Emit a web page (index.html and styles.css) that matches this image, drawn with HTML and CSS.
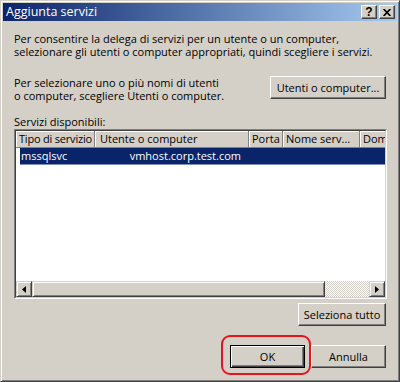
FILE: index.html
```html
<!DOCTYPE html>
<html lang="it">
<head>
<meta charset="utf-8">
<title>Aggiunta servizi</title>
<link rel="stylesheet" href="styles.css">
</head>
<body>
<div class="window">
  <div class="titlebar">
    <span class="title">Aggiunta servizi</span>
    <div class="caption-buttons">
      <span class="cap-btn help">?</span>
      <span class="cap-btn close"><svg width="8" height="7" viewBox="0 0 8 7"><path d="M0.6 0 L7.4 7 M7.4 0 L0.6 7" stroke="#000" stroke-width="1.7" fill="none"/></svg></span>
    </div>
  </div>
  <div class="content">
    <p class="text intro">Per consentire la delega di servizi per un utente o un computer,<br>selezionare gli utenti o computer appropriati, quindi scegliere i servizi.</p>
    <div class="pick-row">
      <p class="text">Per selezionare uno o più nomi di utenti<br>o computer, scegliere Utenti o computer.</p>
      <button class="btn btn-users">Utenti o computer...</button>
    </div>
    <div class="label">Servizi disponibili:</div>
    <div class="listview">
      <div class="lv-inner">
        <div class="lv-header">
          <div class="col c1">Tipo di servizio</div>
          <div class="col c2">Utente o computer</div>
          <div class="col c3">Porta</div>
          <div class="col c4">Nome serv...</div>
          <div class="col c5">Dom</div>
        </div>
        <div class="lv-body">
          <div class="lv-row selected">
            <div class="cell r1">mssqlsvc</div>
            <div class="cell r2">vmhost.corp.test.com</div>
          </div>
        </div>
        <div class="hscroll">
          <div class="sb-btn"><svg width="4" height="7" viewBox="0 0 4 7"><polygon points="0,3.5 4,0 4,7" fill="#000"/></svg></div>
          <div class="sb-thumb"></div>
          <div class="sb-track"></div>
          <div class="sb-btn"><svg width="4" height="7" viewBox="0 0 4 7"><polygon points="4,3.5 0,0 0,7" fill="#000"/></svg></div>
        </div>
      </div>
    </div>
    <div class="select-all-row"><button class="btn btn-all">Seleziona tutto</button></div>
    <div class="footer">
      <button class="btn btn-dlg default">OK</button>
      <button class="btn btn-dlg">Annulla</button>
    </div>
  </div>
</div>
</body>
</html>
```

FILE: styles.css
```css
* { box-sizing: border-box; }
html, body { margin: 0; padding: 0; }
body {
  width: 400px;
  height: 382px;
  overflow: hidden;
  background: #d4d0c8;
  font-family: "Open Sans", "Noto Sans", sans-serif;
  font-size: 11px;
  color: #000;
}
.window {
  width: 400px;
  height: 382px;
  border: 1px solid;
  border-color: #d4d0c8 #404040 #404040 #d4d0c8;
  box-shadow: inset 1px 1px #fff, inset -1px -1px #808080;
  padding: 2px;
  display: flex;
  flex-direction: column;
  background: #d4d0c8;
}
.titlebar {
  height: 18px;
  flex: none;
  display: flex;
  align-items: center;
  justify-content: space-between;
  padding: 0 2px 0 3px;
  background: linear-gradient(to right, #0a246a, #a6caf0);
}
.title {
  color: #fff;
  font-size: 12.5px;
  line-height: 18px;
}
.caption-buttons {
  display: flex;
  gap: 2px;
}
.cap-btn {
  width: 16px;
  height: 14px;
  display: flex;
  align-items: center;
  justify-content: center;
  background: #d4d0c8;
  border: 1px solid;
  border-color: #fff #404040 #404040 #fff;
  box-shadow: inset -1px -1px #808080;
}
.help {
  font-family: "Liberation Sans", sans-serif;
  font-weight: bold;
  font-size: 12px;
  line-height: 12px;
}
.content {
  flex: 1;
  padding: 11px 11px 0 11px;
  display: flex;
  flex-direction: column;
}
.text {
  margin: 0;
  line-height: 13px;
  white-space: nowrap;
}
.pick-row {
  margin-top: 18px;
  display: flex;
  justify-content: space-between;
  align-items: flex-start;
}
.btn {
  font-family: "Open Sans", "Noto Sans", sans-serif;
  font-size: 11px;
  color: #000;
  background: #d4d0c8;
  border: 1px solid;
  border-color: #fff #404040 #404040 #fff;
  box-shadow: inset -1px -1px #808080;
  padding: 0;
  height: 23px;
  line-height: 20px;
  text-align: center;
  white-space: nowrap;
}
.btn-users { width: 116px; }
.label {
  margin-top: 13px;
  line-height: 13px;
}
.listview {
  margin-top: 1px;
  margin-right: -1px;
  height: 170px;
  border: 1px solid;
  border-color: #808080 #fff #fff #808080;
}
.lv-inner {
  height: 100%;
  border: 1px solid;
  border-color: #404040 #d4d0c8 #d4d0c8 #404040;
  background: #fff;
  display: flex;
  flex-direction: column;
  overflow: hidden;
}
.lv-header {
  height: 17px;
  flex: none;
  display: flex;
  overflow: hidden;
  background: #d4d0c8;
}
.col {
  flex: none;
  height: 17px;
  line-height: 16px;
  padding-left: 4px;
  white-space: nowrap;
  overflow: hidden;
  box-shadow: inset 1px 1px #fff;
  border-right: 1px solid #808080;
  border-bottom: 1px solid #808080;
}
.c1 { width: 79px; padding-left: 3px; letter-spacing: -0.2px; }
.c2 { width: 154px; padding-left: 5px; }
.c3 { width: 34px; padding-left: 3px; }
.c4 { width: 77px; padding-left: 3px; }
.c5 { flex: 1; padding-left: 3px; border-right: none; }
.lv-body {
  flex: 1;
}
.lv-row {
  margin-left: 4px;
  height: 17px;
  display: flex;
  line-height: 16px;
}
.selected {
  background: #0a246a;
  color: #fff;
  border-bottom: 1px solid #7f8fbf;
}
.cell { flex: none; white-space: nowrap; }
.r1 { width: 75px; padding-left: 1px; }
.r2 { width: 154px; text-align: right; padding-right: 8px; }
.hscroll {
  height: 16px;
  flex: none;
  display: flex;
}
.sb-btn {
  width: 16px;
  height: 16px;
  flex: none;
  display: flex;
  align-items: center;
  justify-content: center;
  background: #d4d0c8;
  border: 1px solid;
  border-color: #d4d0c8 #404040 #404040 #d4d0c8;
  box-shadow: inset 1px 1px #fff, inset -1px -1px #808080;
}
.sb-thumb {
  width: 293px;
  flex: none;
  background: #d4d0c8;
  border: 1px solid;
  border-color: #d4d0c8 #404040 #404040 #d4d0c8;
  box-shadow: inset 1px 1px #fff, inset -1px -1px #808080;
}
.sb-track {
  flex: 1;
  background: repeating-conic-gradient(#fff 0 25%, #d4d0c8 0 50%) 0 0 / 2px 2px;
}
.select-all-row {
  margin-top: 4px;
  display: flex;
  justify-content: flex-end;
}
.btn-all { width: 88px; }
.footer {
  margin-top: 19px;
  display: flex;
  justify-content: flex-end;
  gap: 6px;
}
.btn-dlg { width: 75px; }
.default {
  position: relative;
  border-color: #000;
  box-shadow: inset 1px 1px #fff, inset -1px -1px #404040, inset -2px -2px #808080;
}
.default::after {
  content: "";
  position: absolute;
  left: -10px;
  top: -11px;
  right: -7px;
  bottom: -8px;
  border: 2px solid #e8141c;
  border-radius: 9px;
}
```
